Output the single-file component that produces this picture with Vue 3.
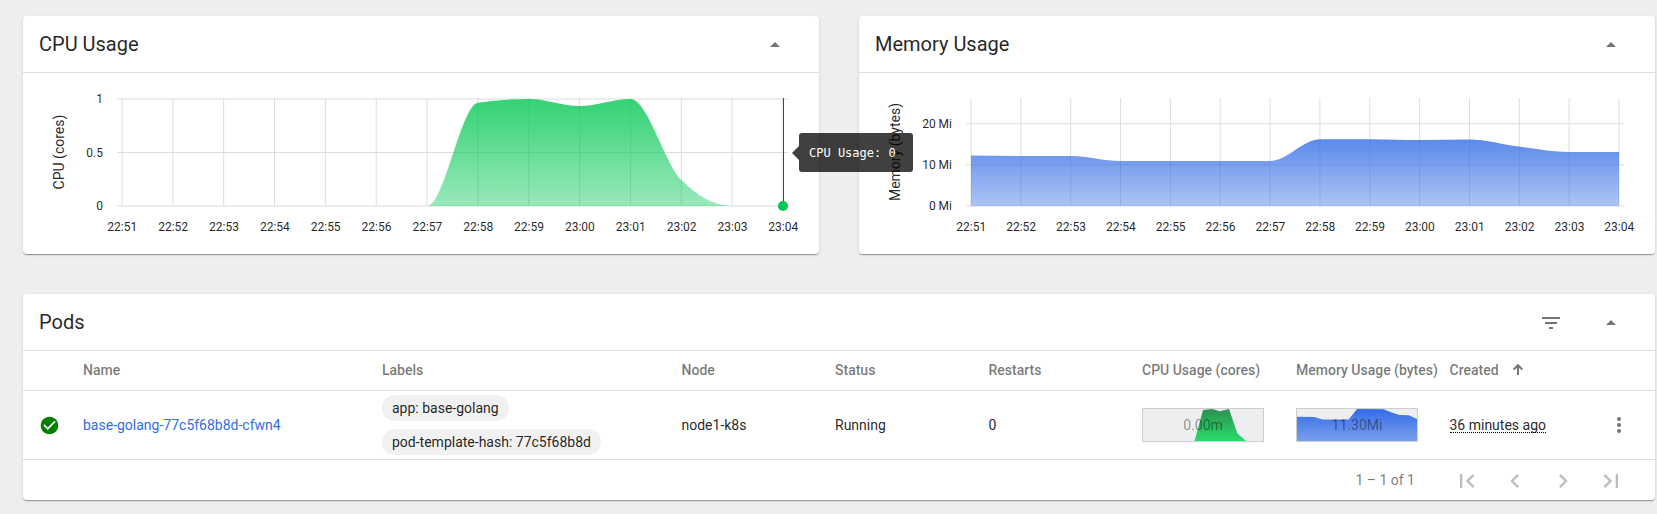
<script setup>
const times = ['22:51', '22:52', '22:53', '22:54', '22:55', '22:56', '22:57', '22:58', '22:59', '23:00', '23:01', '23:02', '23:03', '23:04']

// Monotone cubic interpolation, so the curve never overshoots its samples.
function curve(points) {
  const n = points.length
  const d = []
  for (let i = 0; i < n - 1; i++) d.push((points[i + 1][1] - points[i][1]) / (points[i + 1][0] - points[i][0]))
  const t = points.map((_, i) => {
    if (i === 0 || i === n - 1) return 0
    const a = d[i - 1], b = d[i]
    if (a * b <= 0) return 0
    return Math.sign(a) * Math.min(Math.abs(a), Math.abs(b), Math.abs(a + b) / 4) * 2
  })
  let out = `M${points[0][0]},${points[0][1]}`
  for (let i = 0; i < n - 1; i++) {
    const [x0, y0] = points[i]
    const [x1, y1] = points[i + 1]
    const h = (x1 - x0) / 3
    out += `C${x0 + h},${y0 + h * t[i]} ${x1 - h},${y1 - h * t[i + 1]} ${x1},${y1}`
  }
  return out
}

function makeChart(cfg) {
  const xs = times.map((_, i) => cfg.x0 + (i * (cfg.x1 - cfg.x0)) / (times.length - 1))
  const line = curve(xs.map((x, i) => [x, cfg.ys[i]]))
  return { ...cfg, xs, area: `${line}L${cfg.x1},133L${cfg.x0},133Z` }
}

const charts = [
  makeChart({
    id: 'cpu', title: 'CPU Usage', label: 'CPU (cores)', color: '#00c752', labelX: 41, labelY: 79,
    x0: 99, x1: 760, tickX: 80,
    ticks: [{ y: 26, t: '1' }, { y: 79.5, t: '0.5' }, { y: 133, t: '0' }],
    ys: [133, 133, 133, 133, 133, 133, 133, 29.7, 26, 33, 26, 107, 133, 133],
    cursor: true,
  }),
  makeChart({
    id: 'mem', title: 'Memory Usage', label: 'Memory (bytes)', color: '#326de6', labelX: 41, labelY: 79,
    x0: 112, x1: 760, tickX: 93,
    ticks: [{ y: 50.8, t: '20 Mi' }, { y: 91.9, t: '10 Mi' }, { y: 133, t: '0 Mi' }],
    ys: [82.5, 83, 83, 88, 88, 88, 88, 66.2, 66.2, 67, 66.4, 73.6, 79, 79],
    cursor: false,
  }),
]
</script>

<template>
  <main class="page">
    <div class="charts">
      <section v-for="c in charts" :key="c.id" class="card">
        <header class="card-head">
          <h2>{{ c.title }}</h2>
          <svg class="caret" width="10" height="5"><path d="M0 5L5 0L10 5Z" /></svg>
        </header>
        <div class="plot">
          <svg width="796" height="181" class="chart">
            <defs>
              <linearGradient :id="c.id" x1="0" y1="0" x2="0" y2="1">
                <stop offset="0" :stop-color="c.color" stop-opacity=".8" />
                <stop offset="1" :stop-color="c.color" stop-opacity=".4" />
              </linearGradient>
            </defs>
            <g class="grid">
              <line v-for="x in c.xs" :key="x" :x1="x" :x2="x" y1="25" y2="133" />
              <line v-for="k in c.ticks" :key="k.t" :x1="c.x0 - 5" :x2="c.x1 + 5" :y1="k.y" :y2="k.y" />
            </g>
            <path :d="c.area" :fill="`url(#${c.id})`" />
            <text v-for="(x, i) in c.xs" :key="times[i]" :x="x + 0.3" y="158" text-anchor="middle">{{ times[i] }}</text>
            <text v-for="k in c.ticks" :key="k.t" :x="c.tickX" :y="k.y + 4" text-anchor="end">{{ k.t }}</text>
            <text class="axis" text-anchor="middle" :transform="`translate(${c.labelX} ${c.labelY}) rotate(-90)`">{{ c.label }}</text>
            <g v-if="c.cursor">
              <line x1="760.5" x2="760.5" y1="25" y2="133" class="cursor" />
              <circle cx="760" cy="133" r="5" :fill="c.color" />
            </g>
          </svg>
          <div v-if="c.cursor" class="tooltip">CPU Usage: 0</div>
        </div>
      </section>
    </div>

    <section class="card pods">
      <header class="card-head">
        <h2>Pods</h2>
        <div class="tools">
          <svg class="filter" width="18" height="12"><path d="M0 0h18v2H0zM3 5h12v2H3zM7 10h4v2H7z" /></svg>
          <svg class="caret" width="10" height="5"><path d="M0 5L5 0L10 5Z" /></svg>
        </div>
      </header>
      <div class="row head">
        <span></span><span>Name</span><span>Labels</span><span>Node</span><span>Status</span><span>Restarts</span>
        <span>CPU Usage (cores)</span><span>Memory Usage (bytes)</span>
        <span class="sorted">Created
          <svg width="10" height="11" viewBox="0 0 10 11"><path d="M5 11V1.5M.7 5.5L5 1.2L9.3 5.5" /></svg>
        </span>
      </div>
      <div class="row body">
        <svg class="ok" width="21" height="21" viewBox="0 0 24 24"><path d="M12 2C6.48 2 2 6.48 2 12s4.48 10 10 10 10-4.48 10-10S17.52 2 12 2zm-2 15l-5-5 1.41-1.41L10 14.17l7.59-7.59L19 8l-9 9z" /></svg>
        <a>base-golang-77c5f68b8d-cfwn4</a>
        <div class="chips"><span>app: base-golang</span><span>pod-template-hash: 77c5f68b8d</span></div>
        <span>node1-k8s</span>
        <span>Running</span>
        <span>0</span>
        <div class="spark">
          <svg width="120" height="32">
            <defs><linearGradient id="sc" x1="0" y1="0" x2="0" y2="1"><stop offset="0" stop-color="#2a9150" /><stop offset="1" stop-color="#2cdb6b" /></linearGradient></defs>
            <path fill="url(#sc)" d="M51.5 32L60 1L69 0L77 2.3L86 0L94.3 24.3L103 32Z" />
          </svg>
          <b>0.00m</b>
        </div>
        <div class="spark">
          <svg width="120" height="32">
            <defs><linearGradient id="sm" x1="0" y1="0" x2="0" y2="1"><stop offset="0" stop-color="#326de6" /><stop offset="1" stop-color="#7a9eed" /></linearGradient></defs>
            <path fill="url(#sm)" d="M0 7.7L17.3 8L25.5 10.5H51.7L60 0L86.3 .3L94.7 3.5L102.3 6L111.7 6.3L120 10V32H0Z" />
          </svg>
          <b>11.30Mi</b>
        </div>
        <span class="ago"><i>36 minutes ago</i></span>
        <svg class="more" width="4" height="16"><circle cx="2" cy="2" r="2" /><circle cx="2" cy="8" r="2" /><circle cx="2" cy="14" r="2" /></svg>
      </div>
      <footer>
        <span>1 – 1 of 1</span>
        <svg viewBox="0 0 24 24"><path d="M18.41 16.59L13.82 12l4.59-4.59L17 6l-6 6 6 6zM6 6h2v12H6z" /></svg>
        <svg viewBox="0 0 24 24"><path d="M15.41 7.41L14 6l-6 6 6 6 1.41-1.41L10.83 12z" /></svg>
        <svg viewBox="0 0 24 24"><path d="M10 6L8.59 7.41 13.17 12l-4.58 4.59L10 18l6-6z" /></svg>
        <svg viewBox="0 0 24 24"><path d="M5.59 7.41L10.18 12l-4.59 4.59L7 18l6-6-6-6zM16 6h2v12h-2z" /></svg>
      </footer>
    </section>
  </main>
</template>

<style>
body { background: #edeef0; overflow: hidden; }
</style>

<style scoped>
.page {
  box-sizing: border-box;
  width: 1657px;
  height: 514px;
  padding: 16px 2px 0 23px;
  background: #edeef0;
  color: rgba(0, 0, 0, .87);
  font: 14px Roboto, sans-serif;
}
.charts { display: flex; gap: 40px; margin-bottom: 40px; }
.card {
  width: 796px;
  height: 238px;
  border-radius: 4px;
  background: #fff;
  box-shadow: 0 2px 1px -1px rgba(0, 0, 0, .2), 0 1px 1px rgba(0, 0, 0, .14), 0 1px 3px rgba(0, 0, 0, .12);
}
.pods { width: 1632px; height: 206px; }
.card-head {
  box-sizing: border-box;
  height: 57px;
  padding: 0 39px 0 16px;
  display: flex;
  align-items: center;
  justify-content: space-between;
  border-bottom: 1px solid #e0e0e0;
}
h2 { margin: 0; font-size: 20px; font-weight: 400; line-height: 28px; }
.caret, .filter { fill: #757575; }
.caret { margin-top: 1px; }
.filter { margin-top: 2px; }
.tools { display: flex; align-items: center; gap: 46px; }
.plot { position: relative; }
.chart { display: block; overflow: visible; }
.chart text { font-size: 12px; fill: rgba(0, 0, 0, .87); }
.chart .axis { font-size: 14px; }
.grid line { stroke: #ddd; stroke-width: 1; }
.cursor { stroke: #444; stroke-width: 1; }
.tooltip {
  position: absolute;
  z-index: 5;
  left: 776px;
  top: 60px;
  box-sizing: border-box;
  width: 114px;
  height: 39px;
  padding-left: 10px;
  border-radius: 3px;
  background: rgba(0, 0, 0, .75);
  color: #fff;
  font: 12px/40px "DejaVu Sans Mono", monospace;
  white-space: nowrap;
}
.tooltip::before {
  content: '';
  position: absolute;
  left: -7px;
  top: 13px;
  border: solid transparent;
  border-width: 7px 7px 7px 0;
  border-right-color: rgba(0, 0, 0, .75);
}
.row {
  display: grid;
  grid-template-columns: 60px 299px 299.5px 153.5px 153.5px 153.5px 154px 153.5px 158px 1fr;
  align-items: center;
  box-sizing: border-box;
  border-bottom: 1px solid #e0e0e0;
  white-space: nowrap;
}
.head { height: 40px; padding-bottom: 2px; color: rgba(0, 0, 0, .54); font-weight: 500; }
.sorted { display: flex; align-items: center; gap: 14px; }
.sorted svg { fill: none; stroke: #757575; stroke-width: 2; }
.body { height: 69px; }
.ok { margin-left: 15.5px; fill: #008000; }
a { color: #326de6; }
.chips { display: flex; flex-direction: column; align-items: flex-start; gap: 8px; }
.chips span { height: 26px; padding: 0 10px; border-radius: 13px; background: #f1f1f1; line-height: 26px; }
.spark { display: grid; place-items: center; width: 120px; height: 32px; border: 1px solid #ccced0; background: #edeef0; }
.spark svg, .spark b { grid-area: 1 / 1; }
.spark b { z-index: 1; font-weight: 400; color: rgba(0, 0, 0, .42); }
.ago i { font-style: normal; border-bottom: 1px dotted #000; line-height: 14px; display: inline-block; }
.more { fill: #757575; margin-left: 9px; }
footer { display: flex; align-items: center; justify-content: flex-end; height: 40px; padding-right: 30px; gap: 20px; color: rgba(0, 0, 0, .54); }
footer svg { width: 28px; height: 28px; margin-top: 2px; fill: #bdbdbd; }
footer span { margin-right: 18px; }
</style>
